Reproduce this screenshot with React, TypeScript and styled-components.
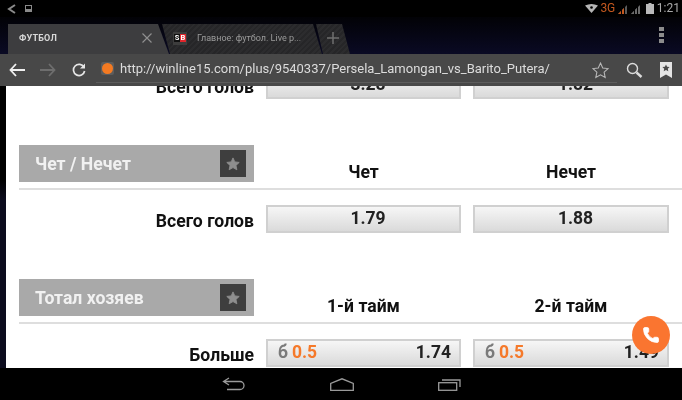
import React from "react";
import styled, { createGlobalStyle } from "styled-components";
import { Phone } from "lucide-react";

const GlobalStyle = createGlobalStyle`
  html, body {
    margin: 0;
    width: 682px;
    height: 400px;
    overflow: hidden;
    background: #000;
    font-family: Roboto, "Liberation Sans", sans-serif;
  }
`;

const Screen = styled.div`
  width: 682px;
  height: 400px;
  display: flex;
  flex-direction: column;
  filter: blur(0.35px);
  background: linear-gradient(#000 0, #000 180px, #0c0c1e 200px, #0c0c1e 100%);
`;

const StatusBar = styled.div`
  height: 17px;
  flex: none;
  background: #000;
  display: flex;
  align-items: center;
  justify-content: space-between;
  padding: 0 2px 0 7px;
`;

const StatusGroup = styled.div<{ $gap: number }>`
  display: flex;
  align-items: center;
  gap: ${({ $gap }) => $gap}px;
`;

const NetworkLabel = styled.span`
  color: #c4581f;
  font-size: 12px;
  letter-spacing: -0.3px;
  line-height: 17px;
`;

const Clock = styled.span`
  color: #a9a9a9;
  font-size: 12px;
  line-height: 17px;
`;

const TabStrip = styled.div`
  height: 37px;
  flex: none;
  display: flex;
  align-items: flex-end;
  padding-left: 8px;
  position: relative;
  background: linear-gradient(#020206 0, #0a0a24 100%);
`;

const ActiveTab = styled.div`
  width: 161px;
  height: 30px;
  background: #3d3d3f;
  clip-path: polygon(0 0, 150px 0, 161px 100%, 0 100%);
  display: flex;
  align-items: center;
  justify-content: space-between;
  padding: 0 0 2px 11px;
  box-sizing: border-box;
  position: relative;
  z-index: 2;
`;

const ActiveTabTitle = styled.span`
  color: #d8d8d8;
  font-size: 9px;
  font-weight: 700;
  letter-spacing: 0.2px;
`;

const CloseIcon = styled.svg`
  margin-right: 17px;
`;

const InactiveTab = styled.div`
  width: 160px;
  height: 30px;
  margin-left: -7px;
  clip-path: polygon(0 0, 151px 0, 160px 100%, 8px 100%);
  background: repeating-linear-gradient(135deg, #262628 0 2px, #2c2c2e 2px 4px);
  display: flex;
  align-items: center;
  gap: 10px;
  padding: 0 0 2px 11px;
  box-sizing: border-box;
`;

const InactiveTabTitle = styled.span`
  color: #9a9a9a;
  font-size: 9px;
  white-space: nowrap;
`;

const SiteBadge = styled.span`
  width: 14px;
  height: 13px;
  background: #3d3d3d;
  display: flex;
  align-items: center;
  justify-content: center;
  font-size: 7.5px;
  font-weight: 700;
  color: #fff;
  line-height: 8px;
`;

const BadgeLetter = styled.span<{ $red?: boolean }>`
  background: ${({ $red }) => ($red ? "#e0262c" : "#111")};
  padding: 0 0.5px;
`;

const NewTab = styled.div`
  width: 34px;
  height: 30px;
  margin-left: -6px;
  clip-path: polygon(0 0, 26px 0, 34px 100%, 7px 100%);
  background: repeating-linear-gradient(135deg, #262628 0 2px, #2c2c2e 2px 4px);
  display: flex;
  align-items: center;
  justify-content: center;
  padding-bottom: 2px;
  box-sizing: border-box;
`;

const MenuDots = styled.div`
  position: absolute;
  right: 18px;
  top: 10px;
  display: flex;
  flex-direction: column;
  gap: 2px;
`;

const MenuDot = styled.span`
  width: 5px;
  height: 4px;
  background: #8c8c8c;
`;

const Toolbar = styled.div`
  height: 32px;
  flex: none;
  background: #484848;
  display: flex;
  align-items: center;
  padding-left: 8px;
`;

const NavButton = styled.div`
  width: 17px;
  height: 17px;
  margin-right: 14px;
  display: flex;
  align-items: center;
  justify-content: center;
`;

const Omnibox = styled.div`
  width: 521px;
  height: 29px;
  flex: none;
  margin-left: -5px;
  align-self: flex-start;
  border-bottom: 1px solid #5c5c5c;
  display: flex;
  align-items: center;
  padding-left: 5px;
  box-sizing: border-box;
`;

const Favicon = styled.span`
  width: 13px;
  height: 13px;
  background: #5c5c5c;
  border-radius: 2px;
  display: flex;
  align-items: center;
  justify-content: center;
  flex: none;
`;

const FaviconDot = styled.span`
  width: 11px;
  height: 11px;
  border-radius: 50%;
  background: #f47a22;
`;

const UrlText = styled.span`
  color: #dcdcdc;
  font-size: 13px;
  margin-left: 6px;
  white-space: nowrap;
`;

const ToolIcons = styled.div`
  display: flex;
  align-items: center;
  margin-left: -25px;
  gap: 17px;
`;

const Page = styled.main`
  flex: 1;
  min-height: 0;
  margin-left: 6px;
  background: #fff;
  overflow: hidden;
  position: relative;
`;

// страница прокручена: первый ряд уходит под тулбар
const Scroller = styled.div`
  margin-top: -15px;
  padding-left: 13px;
`;

const Grid = styled.div`
  display: grid;
  grid-template-columns: 235px 195px 196px;
  column-gap: 12px;
`;

const MarketHead = styled(Grid)`
  border-bottom: 2px solid #dedede;
  padding-bottom: 6px;
  margin-bottom: 15px;
`;

const MarketTitle = styled.div`
  height: 37px;
  background: #a9a9a9;
  display: flex;
  align-items: center;
  justify-content: space-between;
  padding: 0 8px 0 16px;
  box-sizing: border-box;
  color: #f1f1f1;
  font-size: 17.6px;
  font-weight: 700;
`;

const FavButton = styled.div`
  width: 26px;
  height: 27px;
  background: #3e3e3e;
  display: flex;
  align-items: center;
  justify-content: center;
`;

const ColumnHead = styled.div`
  align-self: end;
  text-align: center;
  font-size: 17.6px;
  font-weight: 700;
  line-height: 20px;
  color: #111;
`;

const Row = styled(Grid)`
  height: 28px;
  margin-bottom: 46px;
  align-items: center;
`;

const RowLabel = styled.div`
  text-align: right;
  font-size: 17.6px;
  font-weight: 700;
  color: #111;
  position: relative;
  top: 2px;
`;

const Odd = styled.div<{ $split?: boolean }>`
  height: 28px;
  box-sizing: border-box;
  border: 2px solid #d0d0d0;
  background: linear-gradient(#f6f6f6, #dadada);
  display: flex;
  align-items: center;
  justify-content: ${({ $split }) => ($split ? "space-between" : "center")};
  padding: ${({ $split }) => ($split ? "0 8px 2px 10px" : "0 0 2px 9px")};
  font-size: 17.5px;
  font-weight: 700;
  color: #222;
`;

const Handicap = styled.span`
  display: flex;
  gap: 4px;
`;

const HandicapKind = styled.span`
  color: #7a7a7a;
`;

const HandicapValue = styled.span`
  color: #f5792a;
`;

const CallButton = styled.div`
  position: absolute;
  left: 626px;
  top: 230px;
  width: 38px;
  height: 38px;
  border-radius: 50%;
  background: #fa7530;
  display: flex;
  align-items: center;
  justify-content: center;
`;

const NavBar = styled.div`
  height: 32px;
  flex: none;
  background: #000;
  display: flex;
  align-items: center;
  padding: 0 0 0 222px;
  gap: 84px;
`;

const StarPath = "M8 1l2.1 4.6 5 .6-3.7 3.4 1 5L8 12.1 3.600 14.600l1-5L.9 6.200l5-.6z";

const StarIcon = ({ fill, stroke, size }: { fill: string; stroke: string; size: number }) => (
  <svg width={size} height={size} viewBox="0 0 16 16">
    <path d={StarPath} fill={fill} stroke={stroke} strokeWidth="1" />
  </svg>
);

const StatusLeft = () => (
  <StatusGroup $gap={9}>
    <svg width="9" height="10" viewBox="0 0 9 10">
      <path d="M8 1L2 5l6 4" fill="none" stroke="#8a8a8a" strokeWidth="2" />
    </svg>
    <svg width="7" height="7" viewBox="0 0 7 7">
      <rect x="0.500" y="0.500" width="6" height="6" fill="none" stroke="#8a8a8a" />
      <rect x="1" y="4" width="5" height="2" fill="#8a8a8a" />
    </svg>
  </StatusGroup>
);

const SignalBars = ({ color, active }: { color: string; active: string }) => (
  <svg width="10" height="10" viewBox="0 0 10 10">
    <path d="M9 1v9H7V3zM6 4v6H4V6zM3 7v3H0z" fill={color} />
    <path d="M3 7v3H0zM6 4v6H4V6z" fill={active} />
  </svg>
);

const StatusRight = () => (
  <StatusGroup $gap={3}>
    <svg width="13" height="9" viewBox="0 0 13 9">
      <path d="M0 1.500Q6.500-1.500 13 1.500L6.500 9z" fill="#b5b5b5" />
      <circle cx="6.500" cy="3.500" r="1.300" fill="#000" />
    </svg>
    <NetworkLabel>3G</NetworkLabel>
    <SignalBars color="#5a5a5a" active="#c4581f" />
    <SignalBars color="#6a6a6a" active="#6a6a6a" />
    <svg width="8" height="11" viewBox="0 0 8 11" style={{ marginLeft: 2 }}>
      <path d="M2.500 0h3v1H8v10H0V1h2.500z" fill="#b9b9b9" />
    </svg>
    <Clock>1:21</Clock>
  </StatusGroup>
);

const Tabs = () => (
  <TabStrip>
    <ActiveTab>
      <ActiveTabTitle>ФУТБОЛ</ActiveTabTitle>
      <CloseIcon width="10" height="10" viewBox="0 0 10 10">
        <path d="M.5.500l9 9m0-9l-9 9" stroke="#8f8f8f" strokeWidth="1.200" />
      </CloseIcon>
    </ActiveTab>
    <InactiveTab>
      <SiteBadge>
        <BadgeLetter>S</BadgeLetter>
        <BadgeLetter $red>B</BadgeLetter>
      </SiteBadge>
      <InactiveTabTitle>Главное: футбол. Live p...</InactiveTabTitle>
    </InactiveTab>
    <NewTab>
      <svg width="12" height="12" viewBox="0 0 12 12">
        <path d="M6 0v12M0 6h12" stroke="#6f6f6f" strokeWidth="1.500" />
      </svg>
    </NewTab>
    <MenuDots>
      <MenuDot />
      <MenuDot />
      <MenuDot />
    </MenuDots>
  </TabStrip>
);

const AddressBar = () => (
  <Toolbar>
    <NavButton>
      <svg width="16" height="14" viewBox="0 0 16 14">
        <path d="M7 1L1.500 7 7 13M1.500 7H16" fill="none" stroke="#f0f0f0" strokeWidth="1.800" />
      </svg>
    </NavButton>
    <NavButton>
      <svg width="16" height="14" viewBox="0 0 16 14">
        <path d="M9 1l5.500 6L9 13M14.500 7H0" fill="none" stroke="#6e6e6e" strokeWidth="1.800" />
      </svg>
    </NavButton>
    <NavButton>
      <svg width="14" height="14" viewBox="0 0 14 14">
        <path d="M12 4.200A5.600 5.600 0 1 0 12.600 8" fill="none" stroke="#e6e6e6" strokeWidth="1.700" />
        <path d="M13 0.500V5.500H8z" fill="#e6e6e6" />
      </svg>
    </NavButton>
    <Omnibox>
      <Favicon>
        <FaviconDot />
      </Favicon>
      <UrlText>http://winline15.com/plus/9540337/Persela_Lamongan_vs_Barito_Putera/</UrlText>
    </Omnibox>
    <ToolIcons>
      <StarIcon fill="none" stroke="#b8b8b8" size={17} />
      <svg width="17" height="17" viewBox="0 0 17 17">
        <circle cx="6.500" cy="6.500" r="5" fill="none" stroke="#dcdcdc" strokeWidth="1.400" />
        <path d="M10.500 10.500L15.500 15" stroke="#dcdcdc" strokeWidth="2.400" />
      </svg>
      <svg width="12" height="16" viewBox="0 0 12 16">
        <path d="M0 0h12v16L6 12.500 0 16z" fill="#e4e4e4" />
        <path d="M6 2.500l1.100 2.300 2.500.3-1.800 1.700.5 2.500L6 8l-2.300 1.300.5-2.500-1.800-1.700 2.500-.3z" fill="#484848" />
      </svg>
    </ToolIcons>
  </Toolbar>
);

const MarketHeader = ({ title, first, second }: { title: string; first: string; second: string }) => (
  <MarketHead>
    <MarketTitle>
      {title}
      <FavButton>
        <StarIcon fill="#8e8e8e" stroke="#8e8e8e" size={14} />
      </FavButton>
    </MarketTitle>
    <ColumnHead>{first}</ColumnHead>
    <ColumnHead>{second}</ColumnHead>
  </MarketHead>
);

const HandicapOdd = ({ value }: { value: string }) => (
  <Odd $split>
    <Handicap>
      <HandicapKind>б</HandicapKind>
      <HandicapValue>0.5</HandicapValue>
    </Handicap>
    <span>{value}</span>
  </Odd>
);

const App: React.FC = () => (
  <Screen>
    <GlobalStyle />
    <StatusBar>
      <StatusLeft />
      <StatusRight />
    </StatusBar>
    <Tabs />
    <AddressBar />
    <Page>
      <Scroller>
        <Row>
          <RowLabel>Всего голов</RowLabel>
          <Odd>3.28</Odd>
          <Odd>1.82</Odd>
        </Row>
        <MarketHeader title="Чет / Нечет" first="Чет" second="Нечет" />
        <Row>
          <RowLabel>Всего голов</RowLabel>
          <Odd>1.79</Odd>
          <Odd>1.88</Odd>
        </Row>
        <MarketHeader title="Тотал хозяев" first="1-й тайм" second="2-й тайм" />
        <Row>
          <RowLabel>Больше</RowLabel>
          <HandicapOdd value="1.74" />
          <HandicapOdd value="1.49" />
        </Row>
      </Scroller>
      <CallButton>
        <Phone size={18} color="#fff" fill="#fff" strokeWidth={1} />
      </CallButton>
    </Page>
    <NavBar>
      <svg width="23" height="14" viewBox="0 0 23 14">
        <path d="M7 1L1.500 4.500 7 8M1.500 4.500H18a3.700 3.700 0 0 1 0 8H5" fill="none" stroke="#9a9a9a" strokeWidth="1.300" />
      </svg>
      <svg width="24" height="13" viewBox="0 0 24 13" style={{ marginLeft: 1 }}>
        <path d="M.7 12.300V5.500L12 .8l11.300 4.700v6.800z" fill="none" stroke="#9a9a9a" strokeWidth="1.300" />
      </svg>
      <svg width="23" height="13" viewBox="0 0 23 13">
        <rect x="0.700" y="4.700" width="18" height="7.600" fill="none" stroke="#9a9a9a" strokeWidth="1.300" />
        <path d="M4 2h18v7" fill="none" stroke="#9a9a9a" strokeWidth="1.300" />
      </svg>
    </NavBar>
  </Screen>
);

export default App;
